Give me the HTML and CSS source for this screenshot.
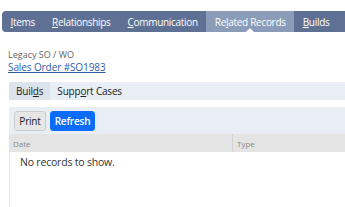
FILE: index.html
```html
<!DOCTYPE html>
<html>
<head>
<meta charset="utf-8">
<link rel="stylesheet" href="styles.css">
</head>
<body>
<nav class="tabbar">
  <span class="tab"><u>I</u>tems</span>
  <span class="tab"><u>R</u>elationships</span>
  <span class="tab"><u>C</u>ommunication</span>
  <span class="tab active">Re<u>l</u>ated Records</span>
  <span class="tab"><u>B</u>uilds</span>
</nav>
<div class="field">
  <div class="label">Legacy SO / WO</div>
  <a class="link" href="#">Sales Order #SO1983</a>
</div>
<div class="panel">
  <div class="subtabs">
    <span class="subtab active">Buil<u>d</u>s</span>
    <span class="subtab">Supp<u>o</u>rt Cases</span>
  </div>
  <div class="toolbar">
    <button class="btn btn-grey">Print</button>
    <button class="btn btn-blue">Refresh</button>
  </div>
  <div class="grid">
    <div class="head">
      <div class="col col-date">Date</div>
      <div class="col col-type">Type</div>
    </div>
    <div class="empty">No records to show.</div>
  </div>
</div>
</body>
</html>
```
FILE: styles.css
```css
* { box-sizing: border-box; }
body {
  margin: 0;
  background: #fff;
  font-family: "Open Sans", "Liberation Sans", sans-serif;
  overflow: hidden;
}
.tabbar {
  display: flex;
  margin: 11px 0 0 2px;
  height: 21px;
  background: #5e7195;
  border-radius: 4px 0 0 4px;
  white-space: nowrap;
}
.tab {
  position: relative;
  display: flex;
  align-items: center;
  padding: 0 8.5px;
  color: #fff;
  font-size: 10px;
  letter-spacing: -0.3px;
}
.tab u { text-decoration-thickness: 1px; text-underline-offset: 1px; }
.tab.active { background: #8b9cb9; }
.tab.active::after {
  content: "";
  position: absolute;
  left: 50%;
  bottom: 0;
  margin-left: -4px;
  border-left: 4px solid transparent;
  border-right: 4px solid transparent;
  border-bottom: 4px solid #fff;
}
.field {
  padding: 17px 0 0 8px;
  line-height: 11px;
}
.label {
  font-size: 9px;
  color: #666;
}
.link {
  font-size: 10px;
  color: #2f5ea8;
  letter-spacing: -0.1px;
}
.panel {
  margin: 9px 0 0 9px;
}
.subtabs {
  display: flex;
  height: 18px;
  background: #e9edf4;
}
.subtab {
  display: flex;
  align-items: center;
  padding: 0 7px;
  font-size: 10px;
  color: #222;
  letter-spacing: -0.2px;
}
.subtab.active { background: #dde3ec; }
.toolbar {
  display: flex;
  gap: 4px;
  align-items: center;
  margin-top: 7px;
  height: 27px;
  padding: 0 5px;
  background: #e9edf4;
}
.btn {
  height: 20px;
  padding: 0;
  border-radius: 3px;
  font-family: "Open Sans", "Liberation Sans", sans-serif;
  font-size: 10px;
  letter-spacing: -0.2px;
}
.btn-grey {
  background: #e6e6e6;
  border: 1px solid #cdcdcd;
  color: #222;
  font-weight: 500;
  width: 32px;
}
.btn-blue {
  background: #0b6cfb;
  border: 1px solid #0b6cfb;
  color: #fff;
  font-weight: 600;
  width: 45px;
}
.head {
  display: flex;
  height: 18px;
  background: #e4e4e4;
  font-size: 8px;
  color: #8a8a8a;
}
.col {
  display: flex;
  align-items: center;
  padding-left: 4px;
}
.col-date {
  width: 224px;
  border-right: 1px solid #d2d2d2;
}
.empty {
  border-left: 1px solid #e6e6e6;
  height: 60px;
  padding: 3px 0 0 10px;
  font-size: 10.5px;
  color: #333;
  letter-spacing: -0.2px;
}
```
